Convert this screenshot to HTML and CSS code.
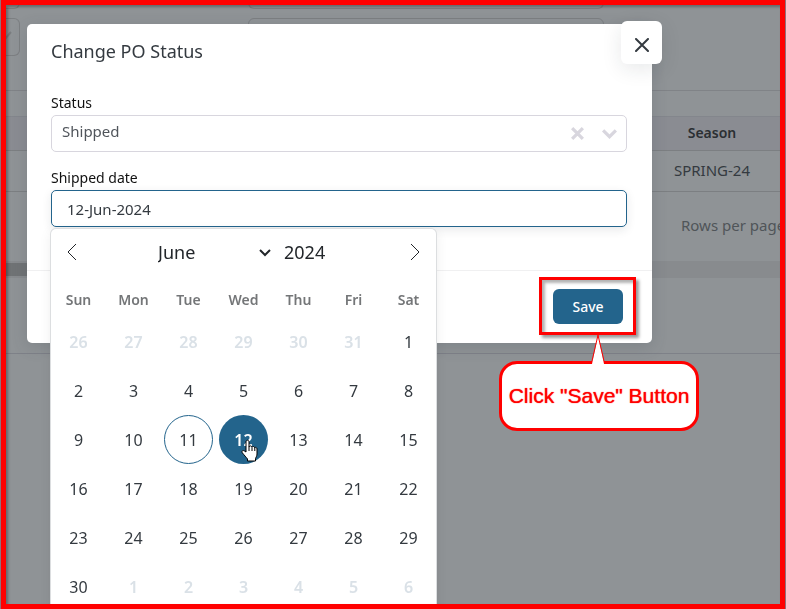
FILE: index.html
```
<!DOCTYPE html>
<html lang="en">
<head>
<meta charset="utf-8">
<meta name="viewport" content="width=device-width, initial-scale=1">
<title>Change PO Status</title>
<link rel="stylesheet" href="styles.css">
</head>
<body>
<div class="page">
  <div class="filters">
    <div class="filter"></div><div class="filter"></div>
    <div class="filter">
      <svg class="filter-arrow" viewBox="0 0 20 20" aria-hidden="true"><path d="M6 12l3 2 6-7"/></svg>
    </div>
    <div class="filter"></div>
  </div>
  <table class="orders">
    <thead><tr><th></th><th class="season">Season</th></tr></thead>
    <tbody><tr><td></td><td class="season">SPRING-24</td></tr></tbody>
  </table>
  <div class="pagination">Rows per page</div>
  <div class="scrollbar"><div class="thumb"></div></div>
  <div class="page-end"></div>
</div>

<div class="overlay">
  <section class="modal" role="dialog" aria-labelledby="modal-title">
    <button class="close" type="button" aria-label="Close">
      <svg viewBox="0 0 14 14" aria-hidden="true"><path d="M1 1l12 12M13 1L1 13"/></svg>
    </button>
    <h1 class="title" id="modal-title">Change PO Status</h1>
    <div class="body">
      <label class="label" for="status">Status</label>
      <div class="field">
        <select class="control status" id="status"><option>Shipped</option></select>
        <div class="indicators">
          <button class="clear" type="button" aria-label="Clear">
            <svg viewBox="0 0 14 14" aria-hidden="true"><path d="M2 2l10 10M12 2L2 12"/></svg>
          </button>
          <svg class="chevron" viewBox="0 0 16 10" aria-hidden="true"><path d="M2 2l6 6 6-6"/></svg>
        </div>
      </div>
      <label class="label" for="date">Shipped date</label>
      <div class="field">
        <input class="control date" id="date" type="text" value="12-Jun-2024">
        <div class="calendar">
          <div class="months">
            <button class="nav" type="button" aria-label="Previous month"><svg viewBox="0 0 10 16" aria-hidden="true"><path d="M9 0L1 8l8 8"/></svg></button>
            <div class="month-wrap">
              <select class="month" aria-label="Month"><option>June</option></select>
              <svg class="month-arrow" viewBox="0 0 12 8" aria-hidden="true"><path d="M1 1l5 5 5-5"/></svg>
            </div>
            <input class="year" type="text" value="2024" aria-label="Year">
            <button class="nav" type="button" aria-label="Next month"><svg viewBox="0 0 10 16" aria-hidden="true"><path d="M1 0l8 8-8 8"/></svg></button>
          </div>
          <table class="days">
            <thead><tr><th>Sun</th><th>Mon</th><th>Tue</th><th>Wed</th><th>Thu</th><th>Fri</th><th>Sat</th></tr></thead>
            <tbody>
              <tr><td><button class="day other">26</button></td><td><button class="day other">27</button></td><td><button class="day other">28</button></td><td><button class="day other">29</button></td><td><button class="day other">30</button></td><td><button class="day other">31</button></td><td><button class="day">1</button></td></tr>
              <tr><td><button class="day">2</button></td><td><button class="day">3</button></td><td><button class="day">4</button></td><td><button class="day">5</button></td><td><button class="day">6</button></td><td><button class="day">7</button></td><td><button class="day">8</button></td></tr>
              <tr><td><button class="day">9</button></td><td><button class="day">10</button></td><td><button class="day today">11</button></td><td><button class="day selected">12<svg class="pointer" viewBox="0 0 17 23" aria-hidden="true"><path d="M5 13V3c0-2.400 3-2.400 3 0v5c.3-1.500 2.800-1.500 3 .3.400-1.300 2.600-1 2.800.6.500-1 2.200-.6 2.200 1V15c0 2-1 3-1.500 4.500V22H6.500v-2C5 18 3.500 16.500 1.300 13.800c-1.200-1.600.6-3 2-1.900z"/><path d="M8 8v4M11 8.500V12M13.800 9v3"/></svg></button></td><td><button class="day">13</button></td><td><button class="day">14</button></td><td><button class="day">15</button></td></tr>
              <tr><td><button class="day">16</button></td><td><button class="day">17</button></td><td><button class="day">18</button></td><td><button class="day">19</button></td><td><button class="day">20</button></td><td><button class="day">21</button></td><td><button class="day">22</button></td></tr>
              <tr><td><button class="day">23</button></td><td><button class="day">24</button></td><td><button class="day">25</button></td><td><button class="day">26</button></td><td><button class="day">27</button></td><td><button class="day">28</button></td><td><button class="day">29</button></td></tr>
              <tr><td><button class="day">30</button></td><td><button class="day other">1</button></td><td><button class="day other">2</button></td><td><button class="day other">3</button></td><td><button class="day other">4</button></td><td><button class="day other">5</button></td><td><button class="day other">6</button></td></tr>
            </tbody>
          </table>
        </div>
      </div>
    </div>
    <footer class="footer">
      <div class="save-wrap">
        <button class="save" type="button">Save</button>
        <div class="highlight"></div>
        <div class="callout">Click "Save" Button
          <svg class="tail" viewBox="0 0 14 30" aria-hidden="true"><path class="tail-fill" d="M1 30L7 2l6 28z"/><path class="tail-line" d="M1 27L7 1l6 26"/></svg>
        </div>
      </div>
    </footer>
  </section>
</div>
<div class="frame"></div>
</body>
</html>
```
FILE: styles.css
```
* { box-sizing: border-box; }

body {
  margin: 0;
  height: 100vh;
  overflow: hidden;
  background: #8f9396;
  color: #343a40;
  font: 15px/20px "Noto Sans", sans-serif;
}

button, input, select { font: inherit; color: inherit; margin: 0; padding: 0; border: 0; background: none; }
svg { display: block; fill: none; stroke: currentColor; }

/* Dimmed page */
.filters {
  display: grid;
  grid-template-columns: 20px 356px;
  column-gap: 228px;
  row-gap: 9px;
  height: 91px;
  overflow: hidden;
  align-content: start;
  border-bottom: 1px solid #808387;
}
.filter { height: 38px; border: 1px solid #7c7f82; border-radius: 6px; }
.filter:nth-child(-n+2) { height: 9px; border-top: 0; border-radius: 0 0 6px 6px; }
.filter:nth-child(odd) { border-left: 0; }
.filter-arrow { width: 20px; height: 20px; margin: 6px 0 0 -4px; color: #7c7f82; stroke-width: 2; }

.orders { width: 100%; margin-top: 25px; border-collapse: collapse; }
.orders th, .orders td { padding: 0 0 2px; border-bottom: 1px solid #7c7f82; }
.orders th { height: 34px; background: #8a8c92; border-top: 1px solid #83868c; color: #2b2f33; font-size: 14px; font-weight: 600; }
.orders td { height: 41px; font-size: 15px; }
.orders .season { width: 148px; text-align: center; }
.pagination { height: 69px; padding: 23px 0 0 681px; color: #505559; overflow: hidden; white-space: nowrap; }
.scrollbar { height: 17px; padding: 2px 0; background: #888b8e; }
.thumb { width: 30%; height: 13px; background: #707375; }
.page-end { height: 76px; border-bottom: 1px solid #7e8188; }

/* Modal */
.overlay { position: fixed; inset: 0; padding: 24px 134px 0 27px; overflow: hidden; }
.modal { position: relative; background: #fff; border-radius: 5px; box-shadow: 0 4px 16px rgba(60, 70, 80, .2); }
.title { margin: 0; padding: 15px 24px 0; font-size: 18px; line-height: 24px; font-weight: 400; }
.close {
  position: absolute;
  top: -3px;
  right: -10px;
  width: 41px;
  height: 43px;
  display: grid;
  place-items: center;
  padding-top: 5px;
  background: #fff;
  border-radius: 6px;
  box-shadow: 0 5px 20px rgba(34, 41, 47, .1);
}
.close svg { width: 14px; height: 14px; stroke-width: 2; stroke-linecap: round; }
.body { padding: 30px 25px 43px 24px; }
.label { display: block; height: 22px; color: #111; font-size: 14px; line-height: 20px; }
.field { position: relative; margin-bottom: 16px; }
.field:last-child { margin-bottom: 0; }
.control {
  display: block;
  width: 100%;
  height: 37px;
  border: 1px solid #d8d6de;
  border-radius: 5px;
  outline: 0;
  appearance: none;
  font-size: 15px;
}
.status { padding: 0 80px 6px 10px; color: #50555b; }
.date { padding: 0 15px; border-color: #23648c; box-shadow: 0 3px 10px rgba(34, 41, 47, .1); }
.indicators {
  position: absolute;
  top: 0;
  right: 9px;
  height: 37px;
  display: flex;
  align-items: center;
  gap: 16px;
  color: #d8d6de;
}
.clear svg { width: 15px; height: 15px; stroke-width: 3; }
.chevron { width: 17px; height: 11px; stroke-width: 3; }

/* Calendar popup */
.calendar {
  position: absolute;
  z-index: 1;
  top: 39px;
  left: 0;
  width: 385px;
  background: #fff;
  border-radius: 5px;
  box-shadow: 0 0 0 1px #dcdee0, 0 3px 13px rgba(0, 0, 0, .08);
}
.months { display: flex; align-items: center; height: 46px; padding: 0 16px; color: #22262a; font-size: 18px; }
.nav { flex: none; height: 16px; }
.nav svg { width: 10px; height: 16px; stroke-width: 1; }
.month-wrap { position: relative; flex: none; width: 126px; margin-left: 81px; }
.month { display: block; width: 100%; appearance: none; line-height: 24px; }
.month-arrow { position: absolute; top: 9px; right: 13px; width: 12px; height: 8px; stroke-width: 2; }
.year { flex: none; width: 60px; }
.nav:last-child { margin-left: auto; }
.days { width: 100%; table-layout: fixed; border-collapse: collapse; }
.days th { height: 42px; padding: 8px 0 0; color: #747678; font-size: 14px; font-weight: 600; }
.days td { height: 49px; padding: 0; }
.day {
  position: relative;
  display: grid;
  place-items: center;
  width: 49px;
  height: 49px;
  margin: 0 auto;
  border-radius: 50%;
  font-size: 16px;
}
.other { color: #dae1e7; font-weight: 600; }
.today { border: 1px solid #23648c; }
.selected { background: #23648c; color: #fff; font-weight: 600; }
.pointer { position: absolute; left: 22px; top: 24px; width: 17px; height: 23px; fill: #fff; stroke: #000; stroke-width: 1; }

/* Footer and annotations */
.footer { display: flex; justify-content: flex-end; padding: 18px 29px 19px; border-top: 1px solid #f0f0f1; }
.save-wrap { position: relative; }
.save { display: block; width: 70px; height: 35px; border-radius: 6px; background: #23648c; color: #fff; font-size: 14px; font-weight: 500; }
.highlight { position: absolute; inset: -12px -13px -11px -14px; border: 3px solid #f00; box-shadow: 3px 3px 3px rgba(0, 0, 0, .4), inset 3px 3px 3px rgba(0, 0, 0, .3); pointer-events: none; }
.callout {
  position: absolute;
  top: 72px;
  right: -76px;
  width: 200px;
  height: 70px;
  border: 3px solid #f00;
  border-radius: 18px;
  background: #fff;
  color: #f00;
  font: 21px/64px "Liberation Sans", sans-serif;
  text-shadow: 0 0 1px #f00;
  text-align: center;
  white-space: nowrap;
}
.tail { position: absolute; left: 89px; top: -30px; width: 14px; height: 30px; }
.tail-fill { fill: #fff; stroke: none; }
.frame { position: fixed; inset: 0 1px; border: 5px solid #f00; box-shadow: inset 2px 2px 3px rgba(0, 0, 0, .3), 0 0 0 1px #92707a; pointer-events: none; }
```
